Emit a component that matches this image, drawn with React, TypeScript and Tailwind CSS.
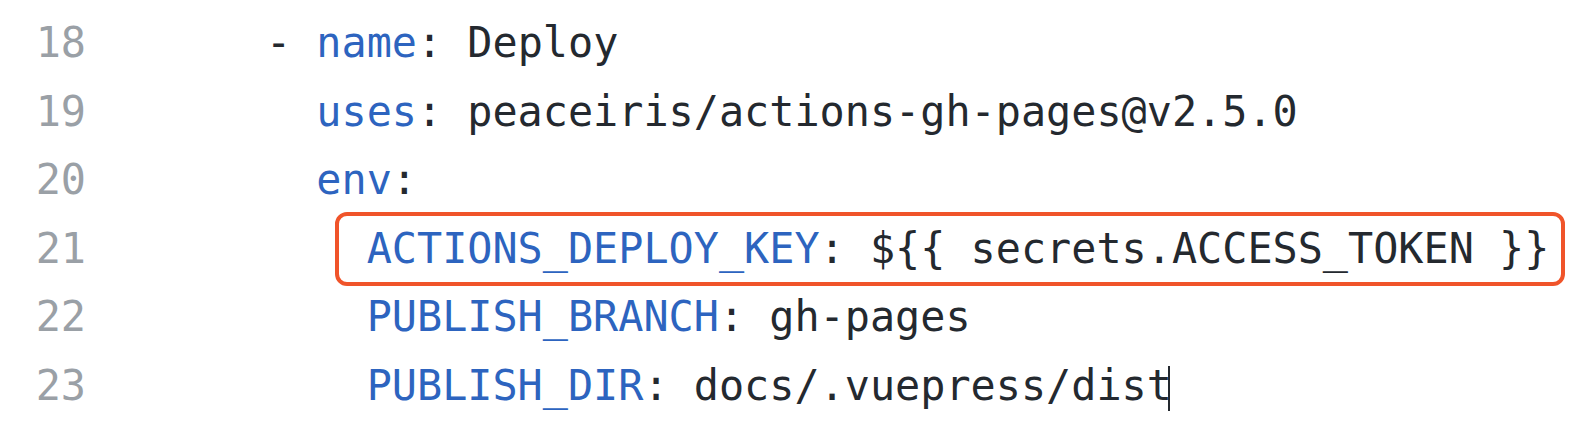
const lines = [
  { n: 18, indent: 6, parts: [["-", "text"], [" ", "text"], ["name", "key"], [": Deploy", "text"]] },
  { n: 19, indent: 8, parts: [["uses", "key"], [": peaceiris/actions-gh-pages@v2.5.0", "text"]] },
  { n: 20, indent: 8, parts: [["env", "key"], [":", "text"]] },
  { n: 21, indent: 10, boxed: true, parts: [["ACTIONS_DEPLOY_KEY", "key"], [": ${{ secrets.ACCESS_TOKEN }}", "text"]] },
  { n: 22, indent: 10, parts: [["PUBLISH_BRANCH", "key"], [": gh-pages", "text"]] },
  { n: 23, indent: 10, cursor: true, parts: [["PUBLISH_DIR", "key"], [": docs/.vuepress/dist", "text"]] },
]

export default function App() {
  return (
    <div
      className="w-[1576px] h-[440px] bg-white pt-[9px] overflow-hidden"
      style={{ fontFamily: '"DejaVu Sans Mono", monospace' }}
    >
      {lines.map((line) => (
        <div key={line.n} className="flex h-[68.6px] items-center text-[41.8px] leading-[68.6px]">
          <div className="w-[86px] text-right text-[#9aa0a6]">{line.n}</div>
          <div className="ml-[29px] whitespace-pre text-[#24292f] flex">
            <span>{" ".repeat(line.indent)}</span>
            <span className="relative">
              {line.boxed && (
                <span className="absolute left-[-32px] right-[-16px] top-[-3px] bottom-[-3px] border-[4px] border-[#f0542a] rounded-[12px]" />
              )}
              {line.parts.map(([t, kind], i) => (
                <span key={i} className={kind === "key" ? "text-[#2d64bf]" : "text-[#24292f]"}>
                  {t}
                </span>
              ))}
              {line.cursor && (
                <span className="inline-block w-[2px] h-[45px] bg-[#24292f] align-middle ml-[-4px]" />
              )}
            </span>
          </div>
        </div>
      ))}
    </div>
  )
}
